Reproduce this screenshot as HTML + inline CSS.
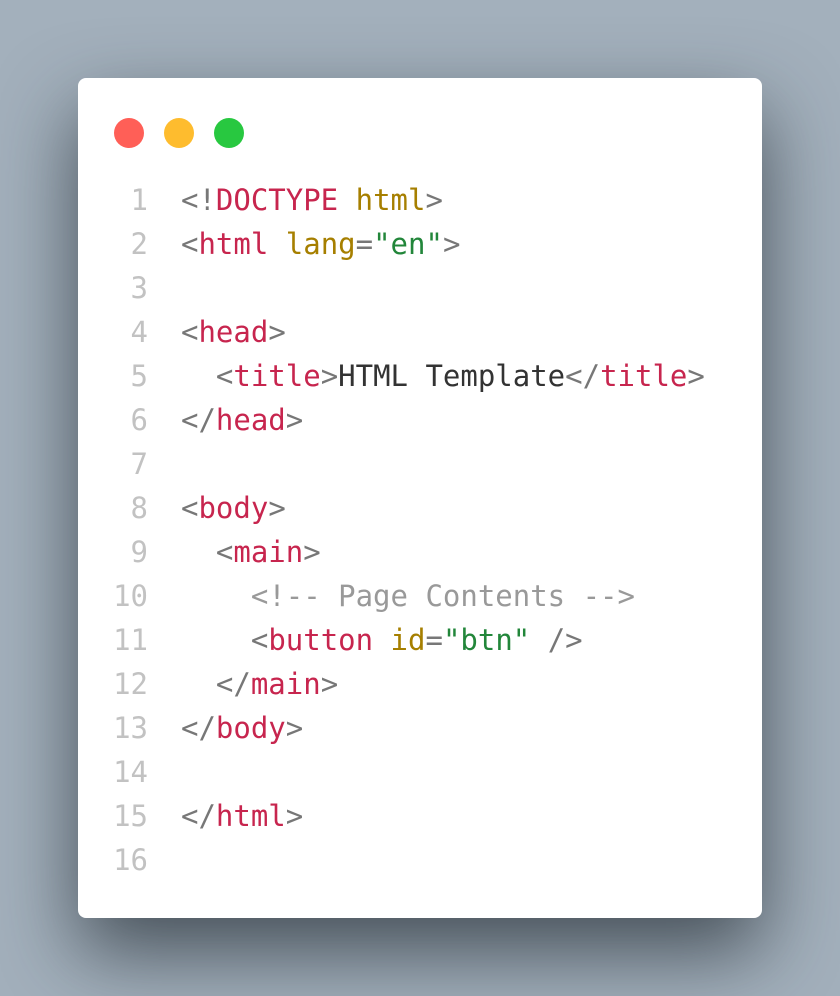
<!DOCTYPE html>
<html><head><style>
html,body{margin:0;padding:0}
body{width:840px;height:996px;background:#a3b0bc;position:relative;overflow:hidden}
.card{position:absolute;left:78px;top:78px;width:684px;height:840px;background:#fff;border-radius:8px;box-shadow:0 34px 80px rgba(30,38,46,0.7)}
.dot{position:absolute;top:40px;width:30px;height:30px;border-radius:50%}
pre{position:absolute;left:0;top:100px;margin:0;font-family:"DejaVu Sans Mono","Liberation Mono",monospace;font-size:29px;line-height:44px;color:#333}
.ln{display:inline-block;width:70px;text-align:right;color:#c2c2c2;margin-right:33px}
.p{color:#777}.t{color:#c7254e}.a{color:#a67f00}.s{color:#22863a}.c{color:#999}
</style></head><body>
<div class="card">
<div class="dot" style="left:36px;background:#ff5f57"></div>
<div class="dot" style="left:86px;background:#febc2e"></div>
<div class="dot" style="left:136px;background:#28c840"></div>
<pre><span class="ln">1</span><span class="p">&lt;!</span><span class="t">DOCTYPE</span> <span class="a">html</span><span class="p">&gt;</span>
<span class="ln">2</span><span class="p">&lt;</span><span class="t">html</span> <span class="a">lang</span><span class="p">=</span><span class="s">"en"</span><span class="p">&gt;</span>
<span class="ln">3</span>
<span class="ln">4</span><span class="p">&lt;</span><span class="t">head</span><span class="p">&gt;</span>
<span class="ln">5</span>  <span class="p">&lt;</span><span class="t">title</span><span class="p">&gt;</span>HTML Template<span class="p">&lt;/</span><span class="t">title</span><span class="p">&gt;</span>
<span class="ln">6</span><span class="p">&lt;/</span><span class="t">head</span><span class="p">&gt;</span>
<span class="ln">7</span>
<span class="ln">8</span><span class="p">&lt;</span><span class="t">body</span><span class="p">&gt;</span>
<span class="ln">9</span>  <span class="p">&lt;</span><span class="t">main</span><span class="p">&gt;</span>
<span class="ln">10</span>    <span class="c">&lt;!-- Page Contents --&gt;</span>
<span class="ln">11</span>    <span class="p">&lt;</span><span class="t">button</span> <span class="a">id</span><span class="p">=</span><span class="s">"btn"</span> <span class="p">/&gt;</span>
<span class="ln">12</span>  <span class="p">&lt;/</span><span class="t">main</span><span class="p">&gt;</span>
<span class="ln">13</span><span class="p">&lt;/</span><span class="t">body</span><span class="p">&gt;</span>
<span class="ln">14</span>
<span class="ln">15</span><span class="p">&lt;/</span><span class="t">html</span><span class="p">&gt;</span>
<span class="ln">16</span></pre>
</div>
</body></html>
